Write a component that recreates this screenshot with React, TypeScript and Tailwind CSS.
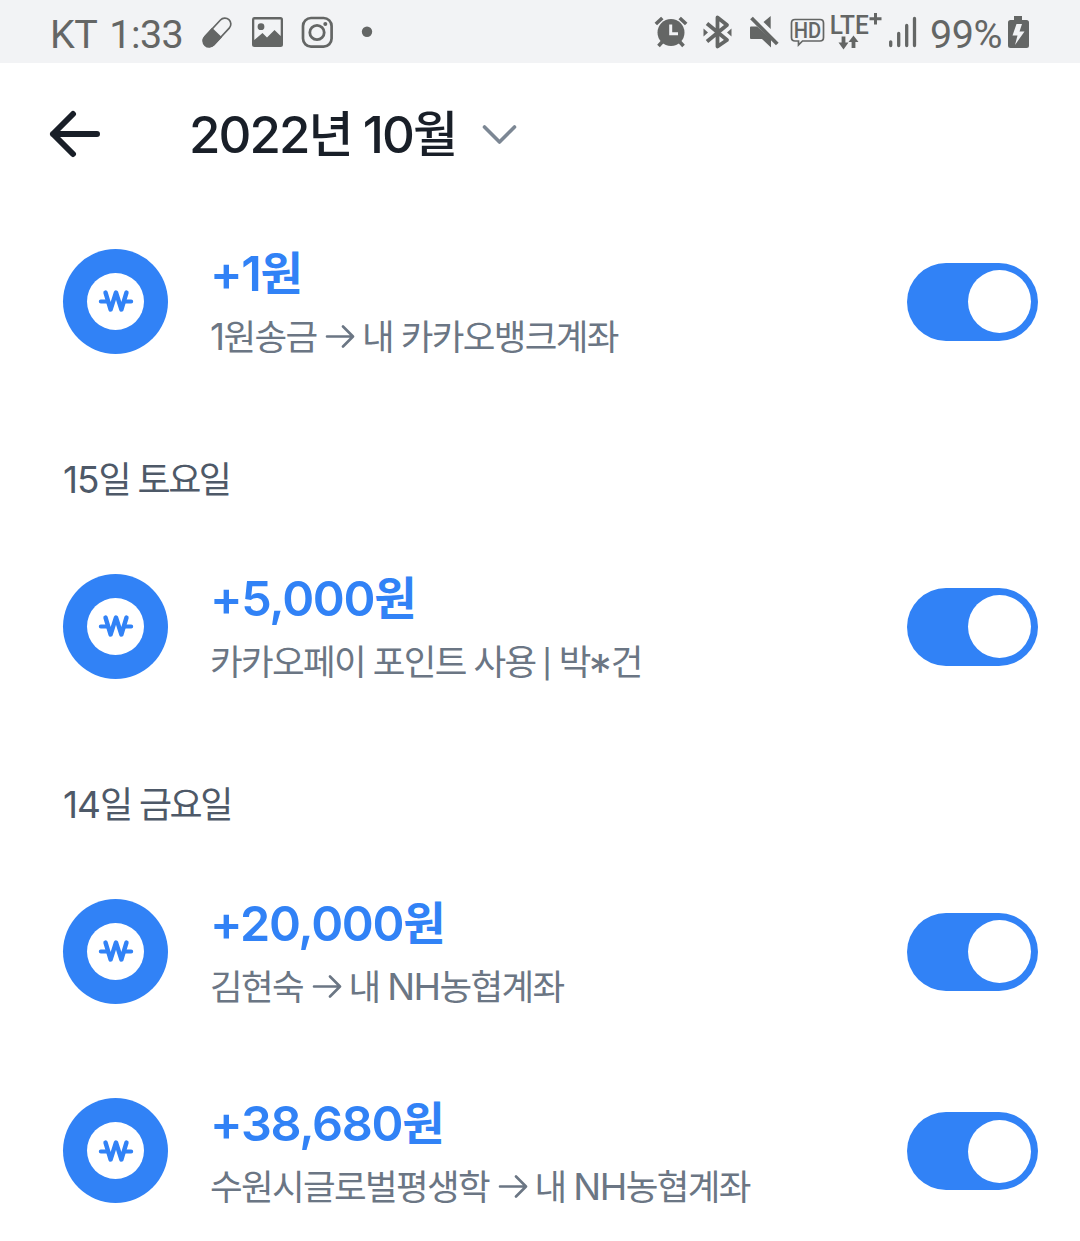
import React from "react";

type Variant = "title" | "amount" | "note" | "date";

const latinStyle: Record<Variant, string> = {
  title: "text-[51px] font-medium tracking-[-1.9px]",
  amount: "text-[48.5px] font-semibold tracking-[-1.3px]",
  note: "text-[37px] font-normal tracking-[-1.5px] [word-spacing:-1.2px]",
  date: "text-[37px] font-normal tracking-[-1px] [word-spacing:-1px]",
};

const hangulStyle: Record<Variant, string> = {
  title: "relative top-[-1px] text-[49px] font-medium tracking-[-2.7px]",
  amount: "relative top-[-1px] text-[46px] font-bold tracking-[-2px]",
  note: "text-[35.5px] font-normal tracking-[-1.65px]",
  date: "text-[36px] font-normal tracking-[-2.5px]",
};

const lineStyle: Record<Variant, string> = {
  title: "h-[60px] leading-[60px] text-[#191f28]",
  amount: "h-[60px] leading-[60px] text-[#3182f6]",
  note: "h-[50px] leading-[50px] text-[#6b7684]",
  date: "h-[50px] leading-[50px] text-[#4e5968]",
};

/** One line of text in which Hangul, Latin and symbol runs carry their own metrics. */
function Line({ text, variant }: { text: string; variant: Variant }) {
  const runs = text.match(/[가-힣]+|→|\||\*|[^가-힣→|*]+/g) ?? [];
  return (
    <div className={`flex items-baseline whitespace-pre ${lineStyle[variant]}`}>
      {runs.map((run, i) => {
        if (run === "→") {
          return (
            <svg key={i} viewBox="0 0 30 24" className="relative top-[-1px] ml-px mr-[-1px] h-6 w-[30px]" fill="none" stroke="currentColor" strokeWidth="2.600" strokeLinecap="round" strokeLinejoin="round">
              <path d="M2 11.500H27.500M18 1.500L28 11.500L18 21.500" />
            </svg>
          );
        }
        if (run === "|") {
          return <span key={i} className="relative top-[-1px] mx-[-1px] font-[Inter,sans-serif] text-[28px] font-medium">|</span>;
        }
        if (run === "*") {
          return <span key={i} className="relative top-[13px] ml-[-1px] mr-[-1px] font-[Inter,sans-serif] text-[46px] leading-none">*</span>;
        }
        return /[가-힣]/.test(run) ? (
          <span key={i} className={`font-['Noto_Sans_CJK_KR',sans-serif] ${hangulStyle[variant]}`}>{run}</span>
        ) : (
          <span key={i} className={`font-[Inter,sans-serif] ${latinStyle[variant]}`}>{run}</span>
        );
      })}
    </div>
  );
}

function WonBadge() {
  return (
    <div className="mt-px flex size-[105px] shrink-0 items-center justify-center rounded-full bg-[#3182f6]">
      <div className="flex size-[57px] items-center justify-center rounded-full bg-white">
        <svg viewBox="0 0 36 24" className="h-6 w-9" fill="none" stroke="#3182f6" strokeLinecap="round" strokeLinejoin="round">
          <path d="M7.500 3.500L12.600 20.500L18 3.500L23.400 20.500L28.500 3.500" strokeWidth="4.400" />
          <path d="M2.800 12.500H9M27 12.500H33.200" strokeWidth="4" />
        </svg>
      </div>
    </div>
  );
}

function Toggle() {
  return (
    <div className="mr-[42px] mt-[2px] flex h-[78px] w-[131px] items-center justify-end rounded-full bg-[#3182f6] pr-[7px]">
      <div className="size-[63px] rounded-full bg-white" />
    </div>
  );
}

function Transaction({ amount, note }: { amount: string; note: string }) {
  return (
    <div className="flex h-[199.5px] shrink-0 items-center pl-[63px]">
      <WonBadge />
      <div className="ml-[42px] flex-1">
        <div className="pb-[9px]">
          <Line text={amount} variant="amount" />
        </div>
        <Line text={note} variant="note" />
      </div>
      <Toggle />
    </div>
  );
}

function DateHeading({ text }: { text: string }) {
  return (
    <div className="flex h-[125.5px] shrink-0 items-center pl-[63px] pt-[27px]">
      <Line text={text} variant="date" />
    </div>
  );
}

function StatusBar() {
  return (
    <div className="flex h-[63px] shrink-0 items-center bg-[#f2f3f5] pl-[50px] font-[Roboto,sans-serif] text-[#646665]">
      <span className="w-[150px] whitespace-pre pt-[6px] text-[39.5px] leading-none tracking-[-0.6px]">KT<span className="ml-[3px]"> 1:33</span></span>
      <svg viewBox="200 0 190 63" className="h-[63px] w-[190px]" fill="none" stroke="currentColor">
        <g transform="rotate(43 217 32.5)">
          <rect x="211" y="15" width="12" height="35" rx="6" strokeWidth="1.700" />
          <path d="M210.200 32.500H223.800V43.500A6.800 6.800 0 0 1 210.200 43.500Z" fill="currentColor" stroke="none" />
        </g>
        <path fillRule="evenodd" fill="currentColor" stroke="none" d="M254 17H280.500Q283 17 283 19.500V44.500Q283 47 280.500 47H254.500Q252 47 252 44.500V19.500Q252 17 254 17ZM254.300 19.500V40L262.500 33L267 37.500L274.500 30L280.700 36V19.500ZM261 23.300A3.400 3.400 0 1 1 261 30.100A3.400 3.400 0 1 1 261 23.300Z" />
        <rect x="303" y="18" width="28.600" height="28.600" rx="8" strokeWidth="2.700" />
        <circle cx="317" cy="32.500" r="7.200" strokeWidth="2.800" />
        <circle cx="325.300" cy="24" r="2" fill="currentColor" stroke="none" />
        <circle cx="367" cy="31.800" r="5.200" fill="currentColor" stroke="none" />
      </svg>
      <svg viewBox="650 0 280 63" className="ml-[260px] h-[63px] w-[280px]" fill="none" stroke="currentColor">
        <circle cx="671" cy="32.500" r="13.500" fill="currentColor" stroke="none" />
        <path d="M655.800 24L662.300 18M686.200 24L679.700 18M663 41L658.500 46M679 41L683.500 46" strokeWidth="3.600" />
        <path d="M670.700 24.500V33.800H678" stroke="#f2f3f5" strokeWidth="3" />
        <path d="M707 23.500L727 40L717.500 46.500V17.500L727 25L707 41.500" strokeWidth="3.800" strokeLinejoin="round" />
        <path d="M703.500 28.500L708 32.500L703.500 36.500ZM731.500 28.500L727 32.500L731.500 36.500Z" fill="currentColor" stroke="none" />
        <path d="M751 26.500H757L771 39V47.500L762 39H751Q750 39 750 38V27.500Q750 26.500 751 26.500ZM770.700 16V29L763.500 22Z" fill="currentColor" stroke="none" />
        <path d="M751.500 18L777.300 44" strokeWidth="3.800" />
        <path d="M795 19.500H820Q823.500 19.500 823.500 23V37.500Q823.500 41 820 41H802.500L798.500 45V41H795Q791.500 41 791.500 37.500V23Q791.500 19.500 795 19.500Z" strokeWidth="1.700" />
        <text x="793.800" y="38" fontSize="21.500" textLength="27.500" lengthAdjust="spacingAndGlyphs" fontWeight="500" fill="currentColor" stroke="none">HD</text>
        <text x="829.800" y="33.700" fontSize="25" textLength="39" lengthAdjust="spacingAndGlyphs" fontWeight="500" fill="currentColor" stroke="none">LTE</text>
        <path d="M875.500 13V24.500M869.500 18.700H881.500" strokeWidth="3" />
        <path d="M843.500 36.500V45M853.500 40V48" strokeWidth="3.800" />
        <path d="M838.500 42.500H848.500L843.500 49.500ZM848.500 42H858.500L853.500 35.500Z" fill="currentColor" stroke="none" />
        <path d="M890.700 41.800V45.500M898.700 33.500V45.500M906.700 25.500V45.500M914.500 18.500V45.500" strokeWidth="3.300" strokeLinecap="round" />
      </svg>
      <span className="w-[76px] whitespace-pre pt-[6px] text-[39.5px] leading-none tracking-[-0.5px]">99%</span>
      <svg viewBox="0 0 24 34" className="h-[34px] w-6" fill="currentColor">
        <path d="M8 1H16V5H20.500Q23 5 23 7.500V30.500Q23 33 20.500 33H4.500Q2 33 2 30.500V7.500Q2 5 4.500 5H8Z" />
        <path d="M10.500 9H16L13.500 16.500H18.500L9 30L11.500 20.500H6.500Z" fill="#f2f3f5" />
      </svg>
    </div>
  );
}

export default function App() {
  return (
    <main className="flex h-[1241px] w-[1080px] flex-col overflow-hidden bg-white">
      <StatusBar />
      <header className="flex h-[138px] shrink-0 items-start pl-[49px] pt-[39px]">
        <svg viewBox="0 0 52 60" className="mt-[2px] h-[60px] w-[52px]" fill="none" stroke="#191f28" strokeWidth="6" strokeLinecap="round" strokeLinejoin="round">
          <path d="M24 10L4 30L24 50M4 30H48" />
        </svg>
        <div className="ml-[88px] w-[271px]">
          <Line text="2022년 10월" variant="title" />
        </div>
        <svg viewBox="0 0 36 24" className="ml-[22px] mt-[20px] h-6 w-9" fill="none" stroke="#7c8794" strokeWidth="3.600" strokeLinecap="round" strokeLinejoin="round">
          <path d="M2.500 5L17.500 20L32.500 5" />
        </svg>
      </header>
      <Transaction amount="+1원" note="1원송금 → 내 카카오뱅크계좌" />
      <DateHeading text="15일 토요일" />
      <Transaction amount="+5,000원" note="카카오페이 포인트 사용 | 박*건" />
      <DateHeading text="14일 금요일" />
      <Transaction amount="+20,000원" note="김현숙 → 내 NH농협계좌" />
      <Transaction amount="+38,680원" note="수원시글로벌평생학 → 내 NH농협계좌" />
    </main>
  );
}
